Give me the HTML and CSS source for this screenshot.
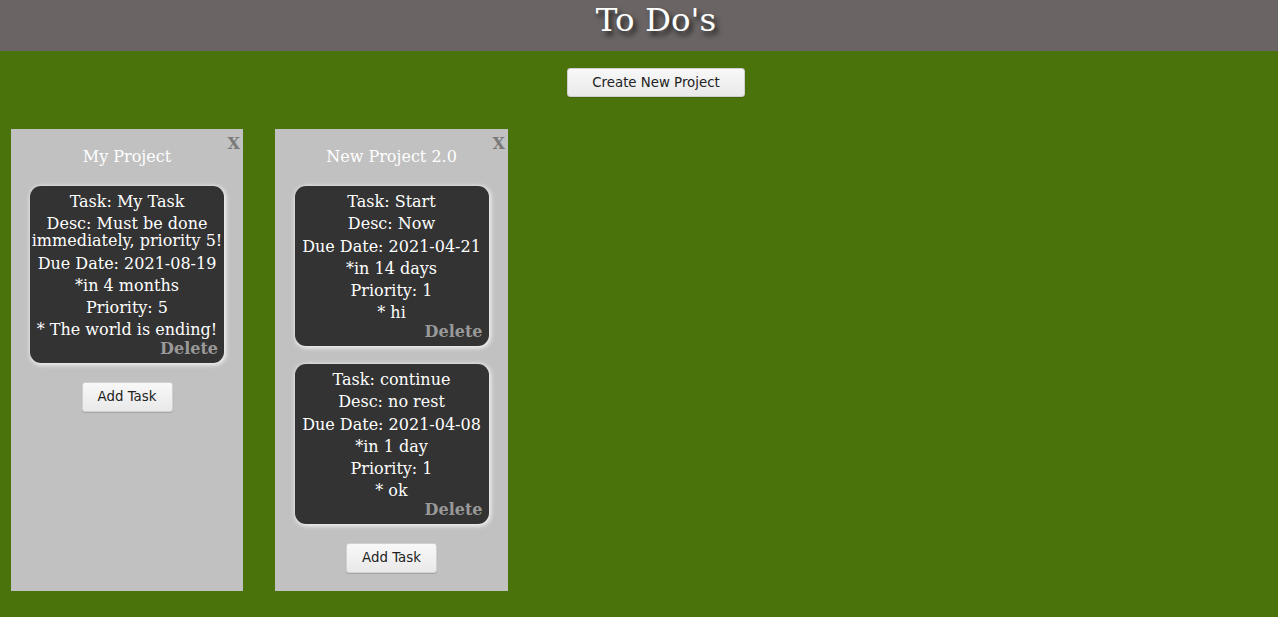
FILE: index.html
```html
<!DOCTYPE html>
<html>
<head>
<meta charset="utf-8">
<title>To Do's</title>
<link rel="stylesheet" href="styles.css">
</head>
<body>
<header class="top-bar">
  <h1 class="title">To Do's</h1>
</header>
<div class="toolbar">
  <button class="btn btn-create">Create New Project</button>
</div>
<main class="projects">
  <section class="project">
    <span class="close">X</span>
    <h2 class="project-title">My Project</h2>
    <div class="tasks">
      <div class="task">
        <p class="line">Task: My Task</p>
        <p class="line">Desc: Must be done immediately, priority 5!</p>
        <p class="line">Due Date: 2021-08-19</p>
        <p class="line">*in 4 months</p>
        <p class="line">Priority: 5</p>
        <p class="line">* The world is ending!</p>
        <div class="delete">Delete</div>
      </div>
    </div>
    <button class="btn btn-add">Add Task</button>
  </section>
  <section class="project">
    <span class="close">X</span>
    <h2 class="project-title">New Project 2.0</h2>
    <div class="tasks">
      <div class="task">
        <p class="line">Task: Start</p>
        <p class="line">Desc: Now</p>
        <p class="line">Due Date: 2021-04-21</p>
        <p class="line">*in 14 days</p>
        <p class="line">Priority: 1</p>
        <p class="line">* hi</p>
        <div class="delete">Delete</div>
      </div>
      <div class="task">
        <p class="line">Task: continue</p>
        <p class="line">Desc: no rest</p>
        <p class="line">Due Date: 2021-04-08</p>
        <p class="line">*in 1 day</p>
        <p class="line">Priority: 1</p>
        <p class="line">* ok</p>
        <div class="delete">Delete</div>
      </div>
    </div>
    <button class="btn btn-add">Add Task</button>
  </section>
</main>
</body>
</html>
```

FILE: styles.css
```css
html, body {
  margin: 0;
  padding: 0;
}
body {
  background: #4a740b;
  font-family: "DejaVu Serif", serif;
  min-height: 617px;
}
.top-bar {
  background: #6a6464;
  height: 51px;
  box-sizing: border-box;
  padding: 2px 0 0 34px;
  text-align: center;
}
.title {
  margin: 0;
  font-size: 32.5px;
  font-weight: normal;
  line-height: 37px;
  color: #fff;
  text-shadow: 3px 4px 5px #1e1e1e;
}
.toolbar {
  display: flex;
  justify-content: center;
  padding: 17px 0 0 34px;
}
.btn {
  font-family: "DejaVu Sans", sans-serif;
  font-size: 13.33px;
  color: #222;
  background: linear-gradient(#f8f8f8, #e9e9e9);
  border: 1px solid #d0d0d0;
  border-radius: 3px;
  height: 29px;
  padding: 0;
  box-shadow: 0 1px 1px rgba(0,0,0,0.15);
}
.btn-create {
  width: 178px;
}
.btn-add {
  width: 91px;
  height: 30px;
  margin-top: 19px;
}
.projects {
  display: flex;
  gap: 32px;
  padding: 32px 0 0 11px;
  align-items: flex-start;
}
.project {
  position: relative;
  background: #c1c1c1;
  height: 462px;
  box-sizing: border-box;
  padding: 18px 19px 0;
  display: flex;
  flex-direction: column;
  align-items: center;
}
.project:first-child {
  width: 232px;
}
.project:nth-child(2) {
  width: 233px;
}
.close {
  position: absolute;
  top: 5px;
  right: 3px;
  font-weight: bold;
  font-size: 16px;
  color: #7a7a7a;
}
.project-title {
  margin: 0;
  font-size: 16px;
  font-weight: normal;
  line-height: 19px;
  color: #fff;
}
.tasks {
  margin-top: 20px;
  display: flex;
  flex-direction: column;
  gap: 18px;
  width: 194px;
}
.task {
  background: #333;
  color: #fff;
  border-radius: 11px;
  padding: 7px 0 5px;
  text-align: center;
  box-shadow: 1px 1px 4px 1px #f2f2f2;
  box-sizing: border-box;
  width: 194px;
}
.line {
  margin: 0 0 5.3px;
  font-size: 16px;
  line-height: 17px;
}
.line:nth-last-child(2) {
  margin-bottom: 0;
}
.delete {
  text-align: right;
  font-weight: bold;
  font-size: 16px;
  line-height: 19px;
  padding-top: 0.5px;
  color: #999;
  padding-right: 6px;
}
```
